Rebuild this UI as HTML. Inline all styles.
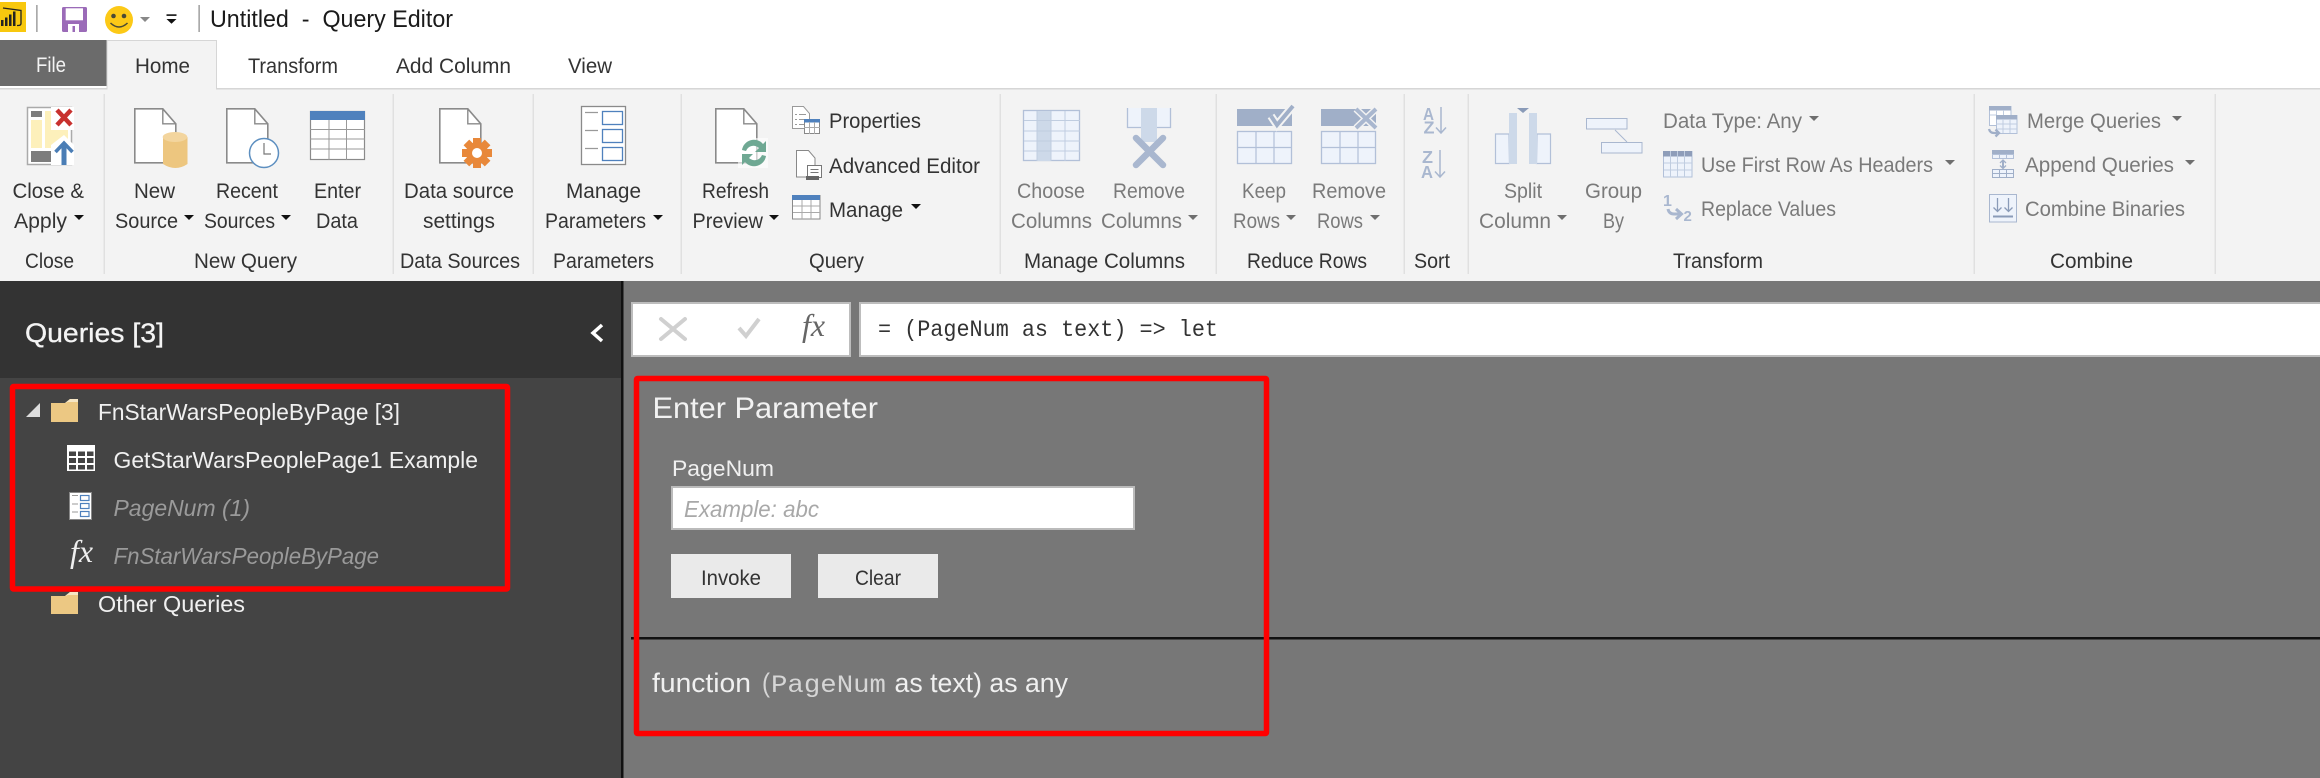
<!DOCTYPE html>
<html><head><meta charset="utf-8"><title>Untitled - Query Editor</title>
<style>
html,body{margin:0;padding:0;background:#777;width:2320px;height:778px;overflow:hidden}
svg{display:block}
text{font-family:"Liberation Sans",sans-serif;white-space:pre}
.r{font-size:21.5px;fill:#333}
.d{font-size:21.5px;fill:#7a7a7a}
.p{font-size:23.5px;fill:#f0f0f0}
.i{font-size:23.5px;fill:#9a9a9a;font-style:italic}
</style></head><body>
<svg width="2320" height="778" viewBox="0 0 2320 778" xmlns="http://www.w3.org/2000/svg">
<defs>
<path id="car" d="M0 0h10l-5 5z"/>
<path id="doc" d="M.8.8h28l13 15v39H.8z" fill="#fff" stroke="#8a8a8a" stroke-width="1.6"/>
<path id="fold" d="M28.8.8v15h13" fill="none" stroke="#8a8a8a" stroke-width="1.4"/>
</defs>
<rect width="2320" height="778" fill="#777"/>
<!-- title bar -->
<rect width="2320" height="88" fill="#fff"/>
<rect x="0" y="2" width="26" height="30" fill="#f8c80e"/>
<path d="M1 20v6h2.500v-6zM5 17.500v8.500h2.500v-8.500zM9 14.500v11.500h2.500v-11.500zM13 11.500v14.500h2.500v-14.500z" fill="#222"/>
<path d="M3 8l18 2.500v13q0 2-3 2h-1" fill="none" stroke="#222" stroke-width="1.300"/>
<rect x="36" y="5" width="1.700" height="27" fill="#aaa"/>
<rect x="62" y="7" width="25" height="25" rx="1.500" fill="#9b6bb8"/>
<rect x="65.700" y="8.300" width="17.300" height="12" fill="#fff"/>
<rect x="68" y="24" width="11" height="8" fill="#fff"/><rect x="72.500" y="26" width="2.500" height="6" fill="#9b6bb8"/>
<circle cx="119" cy="20" r="14" fill="#fcc917"/>
<circle cx="113.500" cy="16" r="2.300" fill="#4a4a35"/><circle cx="124" cy="16" r="2.300" fill="#4a4a35"/>
<path d="M110.500 23q8.500 8 17 0" fill="none" stroke="#4a4a35" stroke-width="1.500"/>
<use href="#car" x="140" y="17" fill="#888"/>
<rect x="166.500" y="14.300" width="10" height="1.600" fill="#111"/><path d="M166.500 19h10l-5 4.800z" fill="#111"/>
<rect x="198.300" y="5" width="1.700" height="27" fill="#aaa"/>
<text x="210" y="27" font-size="24" fill="#1a1a1a" textLength="243" lengthAdjust="spacingAndGlyphs">Untitled  -  Query Editor</text>
<!-- tabs -->
<rect x="0" y="40" width="107" height="46" fill="#6b6b6b"/>
<rect x="0" y="88" width="2320" height="193" fill="#f3f3f3"/>
<rect x="0" y="88" width="2320" height="1.500" fill="#d6d6d6"/>
<path d="M107 89.500V40.500H216.500V89.500" fill="#f3f3f3" stroke="#d6d6d6" stroke-width="1"/>
<rect x="107.500" y="87" width="108.500" height="3" fill="#f3f3f3"/>
<g font-size="21.5">
<text x="36" y="72" fill="#f4f4f4" textLength="30" lengthAdjust="spacingAndGlyphs">File</text>
<text x="135" y="73" fill="#333" textLength="55" lengthAdjust="spacingAndGlyphs">Home</text>
<text x="248" y="73" fill="#333" textLength="90" lengthAdjust="spacingAndGlyphs">Transform</text>
<text x="396" y="73" fill="#333" textLength="115" lengthAdjust="spacingAndGlyphs">Add Column</text>
<text x="568" y="73" fill="#333" textLength="44" lengthAdjust="spacingAndGlyphs">View</text>
</g>
<!-- separators -->
<g fill="#e0e0e0">
<rect x="103.500" y="94" width="1.500" height="180"/><rect x="392.500" y="94" width="1.500" height="180"/><rect x="532.500" y="94" width="1.500" height="180"/><rect x="680.500" y="94" width="1.500" height="180"/><rect x="999.500" y="94" width="1.500" height="180"/><rect x="1215.500" y="94" width="1.500" height="180"/><rect x="1403.500" y="94" width="1.500" height="180"/><rect x="1467.500" y="94" width="1.500" height="180"/><rect x="1973.500" y="94" width="1.500" height="180"/><rect x="2214.500" y="94" width="1.500" height="180"/>
</g>
<!-- ribbon labels -->
<text class="r" x="12.500" y="198" textLength="71.500" lengthAdjust="spacingAndGlyphs">Close &amp;</text>
<text class="r" x="14" y="228" textLength="53" lengthAdjust="spacingAndGlyphs">Apply</text>
<text class="r" x="134" y="198" textLength="41" lengthAdjust="spacingAndGlyphs">New</text>
<text class="r" x="115" y="228" textLength="63" lengthAdjust="spacingAndGlyphs">Source</text>
<text class="r" x="216" y="198" textLength="62" lengthAdjust="spacingAndGlyphs">Recent</text>
<text class="r" x="204" y="228" textLength="71" lengthAdjust="spacingAndGlyphs">Sources</text>
<text class="r" x="314" y="198" textLength="47" lengthAdjust="spacingAndGlyphs">Enter</text>
<text class="r" x="316" y="228" textLength="42" lengthAdjust="spacingAndGlyphs">Data</text>
<text class="r" x="404" y="198" textLength="110" lengthAdjust="spacingAndGlyphs">Data source</text>
<text class="r" x="423" y="228" textLength="72" lengthAdjust="spacingAndGlyphs">settings</text>
<text class="r" x="566" y="198" textLength="75" lengthAdjust="spacingAndGlyphs">Manage</text>
<text class="r" x="545" y="228" textLength="101" lengthAdjust="spacingAndGlyphs">Parameters</text>
<text class="r" x="702" y="198" textLength="67" lengthAdjust="spacingAndGlyphs">Refresh</text>
<text class="r" x="692.500" y="228" textLength="70.500" lengthAdjust="spacingAndGlyphs">Preview</text>
<text class="r" x="829" y="128" textLength="92" lengthAdjust="spacingAndGlyphs">Properties</text>
<text class="r" x="829" y="173" textLength="151" lengthAdjust="spacingAndGlyphs">Advanced Editor</text>
<text class="r" x="829" y="217" textLength="74" lengthAdjust="spacingAndGlyphs">Manage</text>
<text class="r" x="25" y="268" textLength="49" lengthAdjust="spacingAndGlyphs">Close</text>
<text class="r" x="194" y="268" textLength="103" lengthAdjust="spacingAndGlyphs">New Query</text>
<text class="r" x="400" y="268" textLength="120" lengthAdjust="spacingAndGlyphs">Data Sources</text>
<text class="r" x="553" y="268" textLength="101" lengthAdjust="spacingAndGlyphs">Parameters</text>
<text class="r" x="809" y="268" textLength="55" lengthAdjust="spacingAndGlyphs">Query</text>
<text class="r" x="1024" y="268" textLength="161" lengthAdjust="spacingAndGlyphs">Manage Columns</text>
<text class="r" x="1247" y="268" textLength="120" lengthAdjust="spacingAndGlyphs">Reduce Rows</text>
<text class="r" x="1414" y="268" textLength="36" lengthAdjust="spacingAndGlyphs">Sort</text>
<text class="r" x="1673" y="268" textLength="90" lengthAdjust="spacingAndGlyphs">Transform</text>
<text class="r" x="2050" y="268" textLength="83" lengthAdjust="spacingAndGlyphs">Combine</text>
<text class="d" x="1017" y="198" textLength="68" lengthAdjust="spacingAndGlyphs">Choose</text>
<text class="d" x="1011" y="228" textLength="81" lengthAdjust="spacingAndGlyphs">Columns</text>
<text class="d" x="1113" y="198" textLength="72" lengthAdjust="spacingAndGlyphs">Remove</text>
<text class="d" x="1101" y="228" textLength="81" lengthAdjust="spacingAndGlyphs">Columns</text>
<text class="d" x="1242" y="198" textLength="44" lengthAdjust="spacingAndGlyphs">Keep</text>
<text class="d" x="1233" y="228" textLength="47" lengthAdjust="spacingAndGlyphs">Rows</text>
<text class="d" x="1312" y="198" textLength="74" lengthAdjust="spacingAndGlyphs">Remove</text>
<text class="d" x="1317" y="228" textLength="46" lengthAdjust="spacingAndGlyphs">Rows</text>
<text class="d" x="1504" y="198" textLength="38" lengthAdjust="spacingAndGlyphs">Split</text>
<text class="d" x="1479" y="228" textLength="72" lengthAdjust="spacingAndGlyphs">Column</text>
<text class="d" x="1585" y="198" textLength="57" lengthAdjust="spacingAndGlyphs">Group</text>
<text class="d" x="1603" y="228" textLength="21" lengthAdjust="spacingAndGlyphs">By</text>
<text class="d" x="1663" y="128" textLength="139" lengthAdjust="spacingAndGlyphs">Data Type: Any</text>
<text class="d" x="1701" y="172" textLength="232" lengthAdjust="spacingAndGlyphs">Use First Row As Headers</text>
<text class="d" x="1701" y="216" textLength="135" lengthAdjust="spacingAndGlyphs">Replace Values</text>
<text class="d" x="2027" y="128" textLength="134" lengthAdjust="spacingAndGlyphs">Merge Queries</text>
<text class="d" x="2025" y="172" textLength="149" lengthAdjust="spacingAndGlyphs">Append Queries</text>
<text class="d" x="2025" y="216" textLength="160" lengthAdjust="spacingAndGlyphs">Combine Binaries</text>
<!-- carets -->
<g fill="#111">
<use href="#car" x="74" y="215"/><use href="#car" x="184" y="215"/><use href="#car" x="281" y="215"/><use href="#car" x="653" y="215"/><use href="#car" x="769" y="215"/><use href="#car" x="911" y="204"/>
</g>
<g fill="#6e6e6e">
<use href="#car" x="1188" y="215"/><use href="#car" x="1286" y="215"/><use href="#car" x="1370" y="215"/><use href="#car" x="1557" y="215"/><use href="#car" x="1809" y="116"/><use href="#car" x="1945" y="160"/><use href="#car" x="2172" y="116"/><use href="#car" x="2185" y="160"/>
</g>
<!-- Close & Apply icon -->
<rect x="27.500" y="107.500" width="44" height="57" fill="#fff" stroke="#aaa" stroke-width="1.500"/>
<rect x="31" y="120" width="11" height="28" fill="#fdf0bb"/>
<path d="M45 111h6v19h17v18H45z" fill="#fdf0bb"/>
<rect x="31" y="111" width="11" height="6" fill="#7d7d7d"/><rect x="31" y="151" width="20" height="11" fill="#7d7d7d"/>
<path d="M51 107h23v23H58l-7-7z" fill="#fff"/>
<path d="M57 110l14 15M71 110l-14 15" stroke="#c8312e" stroke-width="4.500"/>
<path d="M64 135l10 10v20H51v-20z" fill="#fff"/>
<path d="M64 145v20" stroke="#4a7db5" stroke-width="5"/><path d="M55.500 152l8.500-9 8.500 9" fill="none" stroke="#4a7db5" stroke-width="3.500"/>
<!-- New Source -->
<g transform="translate(134,108)"><use href="#doc"/><use href="#fold"/></g>
<path d="M163 137h24.500v27q-12 8-24.500 0z" fill="#edc67f"/><ellipse cx="175" cy="137" rx="12.300" ry="5" fill="#f3d59e"/>
<!-- Recent -->
<g transform="translate(226,108)"><use href="#doc"/><use href="#fold"/></g>
<circle cx="264" cy="153" r="14.500" fill="#fff" stroke="#5d8fc0" stroke-width="1.500"/>
<path d="M264 143v11h7" fill="none" stroke="#777" stroke-width="1.200"/>
<!-- Enter data -->
<rect x="310.500" y="111.500" width="54" height="48" fill="#fff" stroke="#8a8a8a" stroke-width="1.200"/>
<rect x="310" y="111" width="55" height="9" fill="#4f81bd"/>
<path d="M329 120v40M346.500 120v40M310 129.500h55M310 139h55M310 149h55" stroke="#999" stroke-width="1"/>
<!-- Data source settings -->
<g transform="translate(439,108)"><use href="#doc"/><use href="#fold"/></g>
<g fill="#e8883a"><circle cx="477" cy="153" r="11"/><rect x="473" y="138" width="8" height="30"/><rect x="462" y="149" width="30" height="8"/><rect x="473" y="138" width="8" height="30" transform="rotate(45 477 153)"/><rect x="473" y="138" width="8" height="30" transform="rotate(-45 477 153)"/></g>
<circle cx="477" cy="153" r="5" fill="#fff"/>
<!-- Manage Parameters -->
<rect x="581.500" y="106.500" width="44" height="58" fill="#fff" stroke="#8a8a8a" stroke-width="1.300"/>
<path d="M585 112.500h13M585 130.500h13M585 148.500h13" stroke="#999" stroke-width="1.200"/>
<g fill="#fff" stroke="#4f81bd" stroke-width="1.300"><rect x="602.500" y="111.500" width="20" height="13"/><rect x="602.500" y="129.500" width="20" height="13"/><rect x="602.500" y="147.500" width="20" height="13"/></g>
<!-- Refresh -->
<g transform="translate(715,108)"><use href="#doc"/><use href="#fold"/></g>
<rect x="738" y="138" width="30" height="30" fill="#fff" fill-opacity=".6"/>
<path d="M742 150a12 12 0 0 1 21-6l3-3v11h-11l4-4a8 8 0 0 0-13 3zM766 156a12 12 0 0 1-21 6l-3 3v-11h11l-4 4a8 8 0 0 0 13-3z" fill="#6fa893"/>
<!-- Properties -->
<path d="M792.500 106.500h11l6 7v15h-17z" fill="#fff" stroke="#999" stroke-width="1"/>
<path d="M795 114.500h2M799 114.500h7M795 119.500h2M799 119.500h5M795 124.500h2M799 124.500h5" stroke="#999" stroke-width="1"/>
<rect x="804.500" y="119.500" width="15" height="14" fill="#fff" stroke="#888"/>
<rect x="804" y="119" width="16" height="3.500" fill="#4f81bd"/><path d="M809.500 122v12M814.500 122v12M804 127.500h16" stroke="#aaa"/>
<!-- Advanced Editor -->
<path d="M796.500 150.500h12l6.500 7.500v19h-18.500z" fill="#fff" stroke="#888" stroke-width="1"/>
<rect x="807.500" y="165.500" width="14" height="12" fill="#fff" stroke="#777"/><rect x="806" y="176" width="13" height="4" fill="#666"/>
<path d="M810.500 169.500h8M810.500 172.500h8" stroke="#777"/>
<!-- Manage table -->
<rect x="792.500" y="195.500" width="27.500" height="23.500" fill="#fff" stroke="#8a8a8a"/><rect x="792" y="195" width="28" height="5" fill="#4f81bd"/>
<path d="M802 200v19M811 200v19M793 206h27M793 212.500h27" stroke="#aaa"/>
<!-- Choose Columns -->
<rect x="1023.500" y="110.500" width="56" height="50" fill="#eef3fb" stroke="#b2c0d8" stroke-width="1.300"/>
<rect x="1037" y="111" width="14" height="50" fill="#cdd9e9"/>
<path d="M1037 111v50M1051 111v50M1065 111v50M1024 120.500h56M1024 131h56M1024 141h56M1024 151h56" stroke="#c0cde0" stroke-width="1"/>
<!-- Remove Columns -->
<path d="M1127.500 108v19.500h43V108" fill="#eef3fb" stroke="#b2c0d8" stroke-width="1.300"/>
<rect x="1141" y="108" width="16" height="34" fill="#cdd9e9"/>
<path d="M1136 138l27 27M1163 138l-27 27" stroke="#a9b7cf" stroke-width="6.500" stroke-linecap="round"/>
<!-- Keep Rows -->
<rect x="1237" y="109" width="55" height="17" fill="#a0afc8"/>
<rect x="1237.500" y="131.500" width="54" height="32" fill="#eef3fb" stroke="#b2c0d8" stroke-width="1.300"/>
<path d="M1256 131v33M1274 131v33M1238 147.500h54" stroke="#b2c0d8" stroke-width="1.200"/>
<path d="M1271 116l6 9 16-19" fill="none" stroke="#f3f3f3" stroke-width="8"/><path d="M1271 116l6 9 16-19" fill="none" stroke="#a0afc8" stroke-width="4"/>
<!-- Remove Rows -->
<rect x="1321" y="109" width="55" height="17" fill="#a0afc8"/>
<rect x="1321.500" y="131.500" width="54" height="32" fill="#eef3fb" stroke="#b2c0d8" stroke-width="1.300"/>
<path d="M1340 131v33M1358 131v33M1322 147.500h54" stroke="#b2c0d8" stroke-width="1.200"/>
<path d="M1356 109l20 19M1376 109l-20 19" stroke="#f3f3f3" stroke-width="7"/><path d="M1356 109l20 19M1376 109l-20 19" stroke="#a9b7cf" stroke-width="4"/>
<!-- Sort -->
<g font-size="17.500" font-weight="bold">
<text x="1423" y="120" textLength="11" lengthAdjust="spacingAndGlyphs" fill="#a9b7cf">A</text><text x="1423.500" y="133.500" textLength="11" lengthAdjust="spacingAndGlyphs" fill="#a9b7cf">Z</text>
<text x="1422" y="163" textLength="11" lengthAdjust="spacingAndGlyphs" fill="#a9b7cf">Z</text><text x="1421" y="178" textLength="12" lengthAdjust="spacingAndGlyphs" fill="#a9b7cf">A</text>
</g>
<path d="M1441 107v26M1436 127.500l5 5.500 5-5.500M1440 150v27M1435 171.500l5 5.500 5-5.500" fill="none" stroke="#a9b7cf" stroke-width="1.500"/>
<!-- Split Column -->
<path d="M1509 134h-13.500v29.500h14zM1537 134h13.500v29.500h-14z" fill="#eef3fb" stroke="#b2c0d8" stroke-width="1.200"/>
<rect x="1509" y="113" width="8" height="51" fill="#cdd9e9"/><rect x="1529" y="113" width="8" height="51" fill="#cdd9e9"/>
<path d="M1517 108h12l-6 5z" fill="#8a9bb8"/>
<!-- Group By -->
<rect x="1586.500" y="118.500" width="40.500" height="10.500" fill="#eef3fb" stroke="#a9b7cf"/><rect x="1601.500" y="142.500" width="40.500" height="10.500" fill="#eef3fb" stroke="#a9b7cf"/>
<path d="M1615 130l12 12" stroke="#a9b7cf" stroke-width="1"/>
<!-- First row -->
<rect x="1663.500" y="151.500" width="28.500" height="25.500" fill="#eef3fb" stroke="#b2c0d8"/><rect x="1663" y="151" width="29" height="5.500" fill="#8e9db9"/>
<path d="M1670.500 151v26M1677.500 151v26M1684.500 151v26M1664 163h28M1664 170h28" stroke="#c0cde0"/>
<!-- Replace -->
<text x="1663" y="206" font-size="16" font-weight="bold" fill="#a9b7cf">1</text><text x="1683.500" y="221" font-size="15" font-weight="bold" fill="#a9b7cf">2</text>
<path d="M1668 209q1 5 6 5h7M1676 209l5.500 5-5.500 5" fill="none" stroke="#a9b7cf" stroke-width="3"/>
<!-- Merge -->
<rect x="1989.500" y="106.500" width="21.500" height="19" fill="#fff" stroke="#b2c0d8"/><rect x="1989" y="106" width="22" height="4.500" fill="#a0afc8"/>
<path d="M1996.500 110v9M2003.500 110v6M1990 115h6" stroke="#c0cde0"/>
<rect x="1996.500" y="115.500" width="20.500" height="18" fill="#eef3fb" stroke="#b2c0d8"/><rect x="1996" y="115" width="21" height="4.500" fill="#a0afc8"/>
<path d="M2003 119v14M2010 119v14M1996 124h21M1996 129h21" stroke="#c0cde0"/>
<path d="M1989 129q1 4 5 4h5M1995.500 129.500l3.500 3.500-3.500 3.500" fill="none" stroke="#a0afc8" stroke-width="2.300"/>
<!-- Append -->
<rect x="1992" y="150" width="22" height="4" fill="#a0afc8"/><rect x="1992.500" y="154.500" width="21" height="4" fill="#eef3fb" stroke="#b2c0d8"/><path d="M1999.500 154v4M2006.500 154v4" stroke="#b2c0d8"/>
<path d="M2003 160v8" stroke="#a0afc8" stroke-width="2"/><path d="M2000 163l3-3 3 3M2000 165.500l3 3 3-3" fill="none" stroke="#a0afc8" stroke-width="1.300"/>
<rect x="1992.500" y="169.500" width="21" height="8" fill="#eef3fb" stroke="#a0afc8"/><path d="M1999.500 170v8M2006.500 170v8M1992 173.500h22" stroke="#a0afc8"/>
<!-- Combine -->
<rect x="1989.500" y="194.500" width="27" height="27.500" fill="#eef3fb" stroke="#a9b7cf"/>
<path d="M1997.500 198v13.500M1993.500 207.500l4 4 4-4M2008.500 198v13.500M2004.500 207.500l4 4 4-4" fill="none" stroke="#8a9bb8" stroke-width="1.300"/><rect x="1993" y="215.500" width="20" height="2" fill="#8a9bb8"/>
<!-- left pane -->
<rect x="0" y="281" width="2320" height="497" fill="#777"/>
<rect x="0" y="281" width="622" height="97" fill="#333"/>
<rect x="0" y="378" width="622" height="400" fill="#444"/>
<rect x="621" y="281" width="2.500" height="497" fill="#111"/>
<text x="25" y="342" font-size="27" fill="#f4f4f4" textLength="139" lengthAdjust="spacingAndGlyphs" stroke="#f4f4f4" stroke-width=".3">Queries [3]</text>
<path d="M602 325l-9 8 9 8" fill="none" stroke="#fff" stroke-width="3.500"/>
<rect x="12.500" y="386.500" width="495" height="202.500" fill="none" stroke="#ff0000" stroke-width="5.500" rx="1"/>
<path d="M40 403v14H26z" fill="#ddd"/>
<path d="M51 403H65L70 399H78V422H51z" fill="#ecc883"/><path d="M65 403l5-4h8v3H68z" fill="#f6e6c4"/>
<text class="p" x="98" y="420" textLength="302" lengthAdjust="spacingAndGlyphs">FnStarWarsPeopleByPage [3]</text>
<rect x="67" y="445" width="28" height="26" fill="#fff"/>
<g fill="#444"><rect x="69" y="451.500" width="7" height="4.500"/><rect x="78" y="451.500" width="7" height="4.500"/><rect x="87" y="451.500" width="6.500" height="4.500"/><rect x="69" y="458" width="7" height="5"/><rect x="78" y="458" width="7" height="5"/><rect x="87" y="458" width="6.500" height="5"/><rect x="69" y="465" width="7" height="4.500"/><rect x="78" y="465" width="7" height="4.500"/><rect x="87" y="465" width="6.500" height="4.500"/></g>
<text class="p" x="113.500" y="468" textLength="364.500" lengthAdjust="spacingAndGlyphs">GetStarWarsPeoplePage1 Example</text>
<rect x="69.500" y="492.500" width="22" height="27" fill="#fff" stroke="#888"/>
<g fill="#fff" stroke="#4f81bd" stroke-width="1.200"><rect x="80.500" y="495.500" width="8.500" height="5"/><rect x="80.500" y="503.500" width="8.500" height="5"/><rect x="80.500" y="511.500" width="8.500" height="5"/></g>
<path d="M72 495.500h6M72 504h6M72 512h6" stroke="#999"/>
<text class="i" x="113.500" y="516" textLength="136.500" lengthAdjust="spacingAndGlyphs">PageNum (1)</text>
<text x="70" y="562" font-size="32" fill="#eee" font-style="italic" style="font-family:'Liberation Serif',serif" textLength="23" lengthAdjust="spacingAndGlyphs">fx</text>
<text class="i" x="113.500" y="564" textLength="265.500" lengthAdjust="spacingAndGlyphs">FnStarWarsPeopleByPage</text>
<path d="M51 596H65L70 592H78V614H51z" fill="#ecc883"/><path d="M65 596l5-4h8v3H68z" fill="#f6e6c4"/>
<text class="p" x="98" y="612" textLength="147" lengthAdjust="spacingAndGlyphs">Other Queries</text>
<!-- formula bar -->
<rect x="632" y="303" width="218" height="53" fill="#fff" stroke="#bdbdbd" stroke-width="2"/>
<rect x="860" y="303" width="1470" height="53" fill="#fff" stroke="#bdbdbd" stroke-width="2"/>
<path d="M661 319l24 20M685 319l-24 20" stroke="#d0d0d0" stroke-width="4" stroke-linecap="round"/>
<path d="M739 328l7 8 13-17" fill="none" stroke="#d0d0d0" stroke-width="4"/>
<text x="802" y="336" font-size="32" fill="#666" font-style="italic" style="font-family:'Liberation Serif',serif" textLength="23" lengthAdjust="spacingAndGlyphs">fx</text>
<text x="878" y="336" font-size="23" fill="#333" style="font-family:'Liberation Mono',monospace" textLength="340" lengthAdjust="spacingAndGlyphs">= (PageNum as text) =&gt; let</text>
<!-- enter parameter -->
<rect x="631" y="637" width="1689" height="2.500" fill="#111"/>
<rect x="636.500" y="378.500" width="630" height="355" fill="none" stroke="#ff0000" stroke-width="5.500" rx="1"/>
<text x="652.500" y="418" font-size="30" fill="#f2f2f2" textLength="225.500" lengthAdjust="spacingAndGlyphs">Enter Parameter</text>
<text x="672" y="476" font-size="22.500" fill="#f0f0f0" textLength="102" lengthAdjust="spacingAndGlyphs">PageNum</text>
<rect x="672" y="487" width="462" height="42" fill="#fff" stroke="#bbb" stroke-width="2"/>
<text x="684" y="517" font-size="23" fill="#a8a8a8" font-style="italic" textLength="135" lengthAdjust="spacingAndGlyphs">Example: abc</text>
<rect x="671" y="554" width="120" height="44" fill="#eaeaea"/>
<rect x="818" y="554" width="120" height="44" fill="#eaeaea"/>
<text x="701" y="585" font-size="21" fill="#333" textLength="60" lengthAdjust="spacingAndGlyphs">Invoke</text>
<text x="855" y="585" font-size="21" fill="#333" textLength="46" lengthAdjust="spacingAndGlyphs">Clear</text>
<text x="652" y="692" font-size="27" fill="#f0f0f0" textLength="99" lengthAdjust="spacingAndGlyphs">function</text>
<text x="762" y="692" font-size="27" fill="#d6d6d6" textLength="8" lengthAdjust="spacingAndGlyphs">(</text>
<text x="771" y="692" font-size="25" fill="#d6d6d6" style="font-family:'Liberation Mono',monospace" textLength="115" lengthAdjust="spacingAndGlyphs">PageNum</text>
<text x="894.500" y="692" font-size="27" fill="#f0f0f0" textLength="173.500" lengthAdjust="spacingAndGlyphs">as text) as any</text>
</svg>
</body></html>
